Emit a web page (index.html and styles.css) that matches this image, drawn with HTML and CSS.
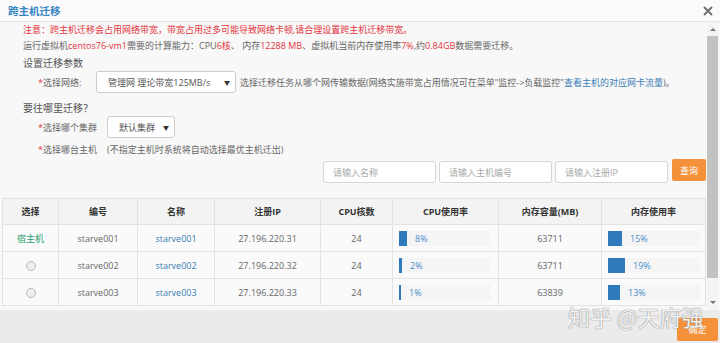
FILE: index.html
```html
<!DOCTYPE html>
<html lang="zh-CN">
<head>
    <meta charset="UTF-8">
    <title>跨主机迁移</title>
    <link rel="stylesheet" href="styles.css">
</head>
<body>
    <div class="dialog">
        <div class="dialog-title">
            <h2>跨主机迁移</h2>
            <svg class="close" width="10" height="10" viewBox="0 0 10 10">
                <path d="M1 1 L9 9 M9 1 L1 9" stroke="#6f6f6f" stroke-width="2"/>
            </svg>
        </div>

        <div class="dialog-main">
            <div class="content">
                <p class="line warn">注意：跨主机迁移会占用网络带宽，带宽占用过多可能导致网络卡顿,请合理设置跨主机迁移带宽。</p>
                <p class="line">运行虚拟机<em>centos76-vm1</em>需要的计算能力：CPU<em>6核</em>、 内存<em>12288 MB</em>、虚拟机当前内存使用率<em>7%</em>,约<em>0.84GB</em>数据需要迁移。</p>
                <p class="line section">设置迁移参数</p>

                <div class="form-row">
                    <label class="label-net"><i>*</i>选择网络:</label>
                    <div class="select select-net">
                        <span>管理网 理论带宽125MB/s</span>
                        <span class="arrow">▼</span>
                    </div>
                    <span class="hint">选择迁移任务从哪个网传输数据(网络实施带宽占用情况可在菜单"监控-&gt;负载监控"<a href="#">查看主机的对应网卡流量</a>)。</span>
                </div>

                <p class="line section section-2">要往哪里迁移？</p>

                <div class="form-row">
                    <label class="label-wide"><i>*</i>选择哪个集群</label>
                    <div class="select select-cluster">
                        <span>默认集群</span>
                        <span class="arrow">▼</span>
                    </div>
                </div>
                <div class="form-row form-row-text">
                    <label class="label-wide"><i>*</i>选择哪台主机</label>
                    <span>(不指定主机时系统将自动选择最优主机迁出)</span>
                </div>

                <div class="search">
                    <input type="text" placeholder="请输入名称">
                    <input type="text" placeholder="请输入主机编号">
                    <input type="text" placeholder="请输入注册IP">
                    <button class="btn">查询</button>
                </div>

                <table class="hosts">
                    <colgroup>
                        <col style="width:56px"><col style="width:79px"><col style="width:77px"><col style="width:106px">
                        <col style="width:72px"><col style="width:106px"><col style="width:103px"><col style="width:104px">
                    </colgroup>
                    <thead>
                        <tr>
                            <th>选择</th><th>编号</th><th>名称</th><th>注册IP</th>
                            <th>CPU核数</th><th>CPU使用率</th><th>内存容量(MB)</th><th>内存使用率</th>
                        </tr>
                    </thead>
                    <tbody>
                        <tr>
                            <td class="host">宿主机</td>
                            <td>starve001</td>
                            <td><a href="#">starve001</a></td>
                            <td>27.196.220.31</td>
                            <td>24</td>
                            <td class="bar-cell"><div class="progress"><div class="fill" style="width:8px"></div><span>8%</span></div></td>
                            <td>63711</td>
                            <td class="bar-cell"><div class="progress"><div class="fill" style="width:14px"></div><span>15%</span></div></td>
                        </tr>
                        <tr>
                            <td><span class="radio"></span></td>
                            <td>starve002</td>
                            <td><a href="#">starve002</a></td>
                            <td>27.196.220.32</td>
                            <td>24</td>
                            <td class="bar-cell"><div class="progress"><div class="fill" style="width:3px"></div><span>2%</span></div></td>
                            <td>63711</td>
                            <td class="bar-cell"><div class="progress"><div class="fill" style="width:17px"></div><span>19%</span></div></td>
                        </tr>
                        <tr>
                            <td><span class="radio"></span></td>
                            <td>starve003</td>
                            <td><a href="#">starve003</a></td>
                            <td>27.196.220.33</td>
                            <td>24</td>
                            <td class="bar-cell"><div class="progress"><div class="fill" style="width:2px"></div><span>1%</span></div></td>
                            <td>63839</td>
                            <td class="bar-cell"><div class="progress"><div class="fill" style="width:12px"></div><span>13%</span></div></td>
                        </tr>
                    </tbody>
                </table>
            </div>

            <div class="scrollbar">
                <span class="up"></span>
                <span class="thumb"></span>
                <span class="down"></span>
            </div>
        </div>

        <div class="dialog-footer">
            <button class="btn btn-ok">确定</button>
        </div>

        <div class="watermark">知乎 @天府强</div>
    </div>
</body>
</html>
```

FILE: styles.css
```css
body {
    margin: 0;
    font-family: "Open Sans", "Noto Sans CJK SC", sans-serif;
    font-size: 9px;
    color: #666;
}
.dialog {
    position: relative;
    width: 720px;
    height: 343px;
    background-color: #f8f8f8;
    overflow: hidden;
}
.dialog-title {
    height: 21px;
    border-bottom: 1px solid #e4e4e4;
    background-color: #fdfafc;
    display: flex;
    align-items: center;
    justify-content: space-between;
    padding: 0 7px 0 8px;
}
.dialog-title h2 {
    margin: 0;
    font-size: 10.5px;
    font-weight: bold;
    color: #3585c2;
}
.dialog-main {
    display: flex;
    height: 288px;
}
.content {
    flex: 1;
}
.line {
    margin: 0;
    padding-left: 23px;
    line-height: 16px;
}
.line em {
    font-style: normal;
    color: #e2353d;
}
.warn {
    color: #e2353d;
}
.section {
    font-size: 10px;
    color: #555;
    margin-top: 1px;
}
.section-2 {
    margin-top: 7px;
}
.form-row {
    display: flex;
    align-items: center;
    height: 22px;
    padding-left: 38px;
}
.form-row-text {
    margin-top: 2px;
    height: 18px;
}
.form-row label i {
    font-style: normal;
    color: #e2353d;
}
.label-net {
    width: 58px;
}
.label-wide {
    width: 69px;
}
.select {
    box-sizing: border-box;
    height: 22px;
    display: flex;
    align-items: center;
    justify-content: space-between;
    padding: 0 5px 0 11px;
    background-color: #fff;
    border: 1px solid #ccc;
    border-radius: 3px;
    color: #555;
}
.select .arrow {
    font-size: 6px;
    color: #333;
}
.select-net {
    width: 140px;
}
.select-cluster {
    width: 68px;
}
.hint {
    margin-left: 4px;
}
.hint a {
    color: #3a7cb5;
    text-decoration: none;
}
.search {
    display: flex;
    justify-content: flex-end;
    align-items: flex-start;
    gap: 3px;
    margin-top: 1px;
    padding-right: 1px;
    height: 39px;
}
.search input {
    box-sizing: border-box;
    width: 113px;
    height: 22px;
    margin-top: 2px;
    padding: 0 9px;
    border: 1px solid #d6d6d6;
    border-radius: 3px;
    background-color: #fff;
    font-family: inherit;
    font-size: 9px;
    outline: none;
}
.search input::placeholder {
    color: #aaa;
}
.btn {
    height: 22px;
    padding: 0 8px;
    border: none;
    border-radius: 2px;
    background-color: #f5913a;
    color: #fff;
    font-family: inherit;
    font-size: 9px;
}
.search .btn {
    width: 34px;
    margin-left: 1px;
}
.hosts {
    margin-left: 2px;
    width: 703px;
    table-layout: fixed;
    border-collapse: collapse;
    background-color: #fafafa;
}
.hosts th,
.hosts td {
    border: 1px solid #e2e2e2;
    text-align: center;
    padding: 0;
}
.hosts th {
    height: 25px;
    background-color: #f3f3f3;
    color: #333;
    font-weight: bold;
}
.hosts td {
    height: 26px;
    color: #666;
}
.hosts td a {
    color: #3a7cb5;
    text-decoration: none;
}
.hosts td.host {
    color: #22a06a;
}
.radio {
    display: inline-block;
    width: 8px;
    height: 8px;
    border: 1px solid #b8b8b8;
    border-radius: 50%;
    background-color: #eee;
    vertical-align: middle;
}
.bar-cell {
    padding-left: 6px !important;
}
.progress {
    display: flex;
    align-items: center;
    width: 92px;
    height: 15px;
    background-color: #f5f5f5;
}
.progress .fill {
    height: 15px;
    background-color: #2f79bd;
}
.progress span {
    margin-left: 8px;
    color: #4a8bc8;
}
.scrollbar {
    width: 11px;
    margin-right: 2px;
    display: flex;
    flex-direction: column;
    align-items: center;
    background-color: #f4f4f4;
}
.scrollbar .up,
.scrollbar .down {
    width: 0;
    height: 0;
    border-left: 3px solid transparent;
    border-right: 3px solid transparent;
}
.scrollbar .up {
    margin-top: 6px;
    border-bottom: 3px solid #777;
}
.scrollbar .thumb {
    width: 11px;
    height: 242px;
    margin-top: 5px;
    background-color: #c2c2c2;
}
.scrollbar .down {
    margin-top: 23px;
    border-top: 3px solid #777;
}
.dialog-footer {
    height: 33px;
    background-color: #ebebeb;
    display: flex;
    justify-content: flex-end;
    align-items: flex-start;
    padding-right: 2px;
}
.btn-ok {
    margin-top: 8px;
    width: 41px;
    height: 23px;
}
.watermark {
    position: absolute;
    left: 568px;
    top: 301px;
    font-family: "Noto Sans CJK SC", sans-serif;
    font-size: 22px;
    line-height: 30px;
    color: #f2f2f2;
    text-shadow: 0 0 1px #888, 0 0 1px #888;
}
```
